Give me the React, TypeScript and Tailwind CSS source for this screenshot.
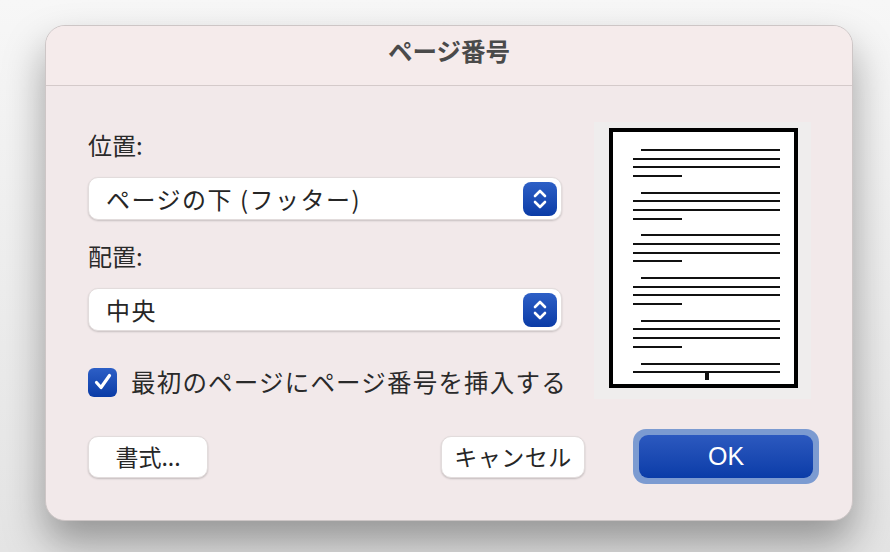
const jp = { fontFamily: '"Noto Sans CJK JP", "Noto Sans", sans-serif' };

function Stepper() {
  return (
    <div className="flex h-[34px] w-[34px] items-center justify-center rounded-[8px] bg-gradient-to-b from-[#2d5fc6] to-[#0a3ba6]">
      <svg width="16" height="22" viewBox="0 0 16 22" fill="none" stroke="white" strokeWidth="2.6" strokeLinecap="round" strokeLinejoin="round">
        <path d="M3 8 L8 3 L13 8" />
        <path d="M3 14 L8 19 L13 14" />
      </svg>
    </div>
  );
}

function Select({ value }: { value: string }) {
  return (
    <div className="flex h-[43px] items-center justify-between rounded-[10px] border border-[#e2dcdc] bg-white pl-[17px] pr-[4px] shadow-[0_1px_2px_rgba(0,0,0,0.18)]">
      <span className="text-[24px] leading-none tracking-[1.5px] text-[#262626]">{value}</span>
      <Stepper />
    </div>
  );
}

function PagePreview() {
  const paras = [0, 1, 2, 3, 4, 5];
  return (
    <div className="flex h-[277px] w-[217px] justify-center bg-[#efeded] pt-[6px] pl-[1px]">
      <svg width="189" height="260" viewBox="0 0 189 260">
        <rect x="2" y="2" width="185" height="256" fill="white" stroke="black" strokeWidth="4" />
        {paras.map((p) => {
          const y = 22 + p * 42.7;
          return (
            <g key={p} fill="#111">
              <rect x="32" y={Math.round(y - 1)} width="139" height="2" />
              <rect x="24" y={Math.round(y + 7.6)} width="147" height="2" />
              {p < 5 && <rect x="24" y={Math.round(y + 16.2)} width="147" height="2" />}
              {p < 5 && <rect x="24" y={Math.round(y + 24.8)} width="49" height="2" />}
            </g>
          );
        })}
        <rect x="96" y="244" width="4" height="8" fill="#111" />
      </svg>
    </div>
  );
}

export default function App() {
  return (
    <div className="h-[552px] w-[890px] overflow-hidden bg-gradient-to-b from-[#f7f7f7] to-[#e4e4e4] pt-[25px] pl-[45px]" style={jp}>
      <div className="flex h-[496px] w-[808px] flex-col overflow-hidden rounded-[20px] border border-[#cdc6c6] bg-[#f2e9ea] shadow-[0_22px_40px_rgba(0,0,0,0.35)]">
        <div className="flex h-[60px] shrink-0 items-center justify-center border-b border-[#d4caca] bg-[#f5ebeb] pb-[8px]">
          <span className="text-[24.5px] font-bold text-[#4a4a4a]">ページ番号</span>
        </div>

        <div className="flex pl-[42px] pt-[44px]">
          <div className="flex w-[474px] flex-col">
            <span className="h-[30px] text-[24px] leading-[30px] text-[#2a2a2a]">位置:</span>
            <div className="mt-[17px]">
              <Select value="ページの下 (フッター)" />
            </div>
            <span className="mt-[21px] h-[30px] text-[24px] leading-[30px] text-[#2a2a2a]">配置:</span>
            <div className="mt-[17px]">
              <Select value="中央" />
            </div>
            <div className="mt-[36px] flex h-[30px] items-center gap-[14px]">
              <div className="flex h-[29px] w-[29px] shrink-0 items-center justify-center rounded-[6px] bg-gradient-to-b from-[#2d5fc6] to-[#0a3ba6]">
                <svg width="22" height="22" viewBox="0 0 22 22" fill="none" stroke="white" strokeWidth="3.2" strokeLinecap="round" strokeLinejoin="round">
                  <path d="M4.5 11.5 L9 16.5 L17.5 4.5" />
                </svg>
              </div>
              <span className="whitespace-nowrap text-[24.5px] leading-none tracking-[1.2px] text-[#2a2a2a]">最初のページにページ番号を挿入する</span>
            </div>
          </div>
          <div className="ml-[32px] -mt-[8px]">
            <PagePreview />
          </div>
        </div>

        <div className="mt-[30px] flex items-center pl-[42px] pr-[33px]">
          <button className="flex h-[42px] w-[120px] items-center justify-center rounded-[10px] border border-[#e2dcdc] bg-white text-[23px] text-[#262626] shadow-[0_1px_2px_rgba(0,0,0,0.2)]">
            書式...
          </button>
          <div className="flex-1" />
          <button className="flex h-[42px] w-[144px] items-center justify-center rounded-[10px] border border-[#e2dcdc] bg-white text-[23px] tracking-[0.5px] text-[#262626] shadow-[0_1px_2px_rgba(0,0,0,0.2)]">
            キャンセル
          </button>
          <div className="ml-[48px] rounded-[13px] bg-[#7c9bd1] p-[6px]">
            <button className="flex h-[43px] w-[174px] items-center justify-center rounded-[9px] bg-gradient-to-b from-[#2c59bf] to-[#0a3ca8] text-[25px] text-white" style={{ fontFamily: '"Liberation Sans", "Noto Sans CJK JP", sans-serif' }}>
              OK
            </button>
          </div>
        </div>
      </div>
    </div>
  );
}
